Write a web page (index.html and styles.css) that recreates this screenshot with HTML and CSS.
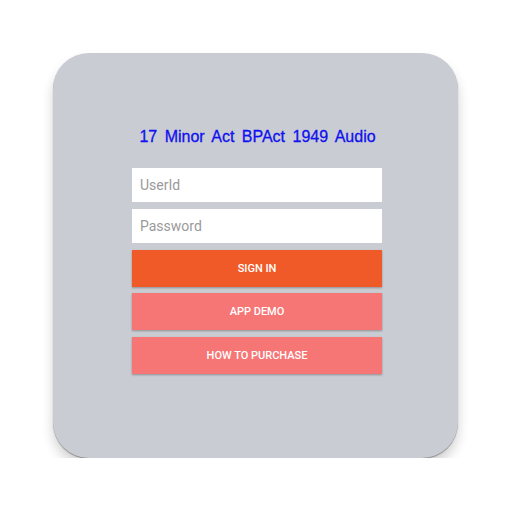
FILE: index.html
```html
<!DOCTYPE html>
<html>
<head>
    <title>17 Minor Act BPAct 1949 Audio</title>
    <link rel="stylesheet" href="styles.css">
</head>
<body>
    <div class="card">
        <h1 class="title">17 Minor Act BPAct 1949 Audio</h1>
        <div class="form">
            <input class="field" type="text" placeholder="UserId">
            <input class="field" type="password" placeholder="Password">
            <button class="btn btn-main">SIGN IN</button>
            <button class="btn btn-alt">APP DEMO</button>
            <button class="btn btn-alt">HOW TO PURCHASE</button>
        </div>
    </div>
</body>
</html>
```

FILE: styles.css
```css
body {
    margin: 0;
    padding: 0;
    background-color: #fff;
    font-family: Roboto, Arial, sans-serif;
}
.card {
    margin: 53px 0 0 53px;
    width: 405px;
    height: 405px;
    box-sizing: border-box;
    border-radius: 36px;
    background-color: #c9ccd2;
    box-shadow: 0 1px 1px rgba(0, 0, 0, 0.35), 0 8px 12px rgba(0, 0, 0, 0.18);
    padding-top: 75px;
    display: flex;
    flex-direction: column;
    align-items: center;
}
.title {
    margin: 0 0 0 4px;
    font-family: "Liberation Sans", Arial, sans-serif;
    font-weight: normal;
    font-size: 16px;
    line-height: 18px;
    word-spacing: 3px;
    color: #1010f0;
    -webkit-text-stroke: 0.3px #1010f0;
}
.form {
    margin: 22px 0 0 3px;
    width: 250px;
    display: flex;
    flex-direction: column;
}
.field {
    height: 34px;
    box-sizing: border-box;
    border: none;
    margin: 0 0 7px 0;
    padding: 0 8px;
    background-color: #fff;
    font-family: Roboto, Arial, sans-serif;
    font-size: 14px;
    color: #333;
}
.field::placeholder {
    color: #9a9a9a;
}
.btn {
    height: 37px;
    border: none;
    margin: 0 0 6px 0;
    font-family: Roboto, Arial, sans-serif;
    font-weight: 500;
    font-size: 11px;
    color: #fff;
    box-shadow: 0 1px 2px rgba(0, 0, 0, 0.3);
}
.btn-main {
    background-color: #f05a28;
}
.btn-alt {
    height: 37px;
    margin-bottom: 7px;
    background-color: #f67575;
}
```
